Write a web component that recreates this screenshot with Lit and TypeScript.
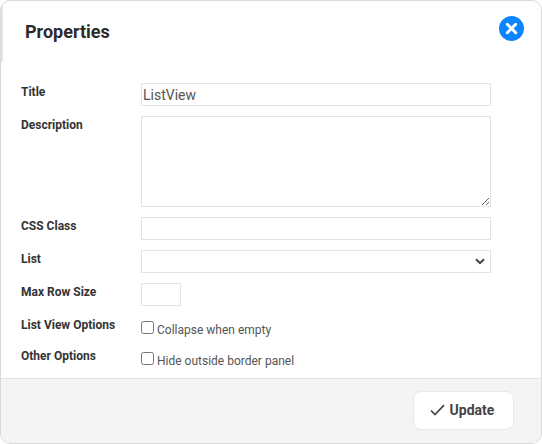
import { LitElement, html, css } from "lit";
import { customElement } from "lit/decorators.js";

@customElement("app-root")
export class AppRoot extends LitElement {
  static styles = css`
    :host { display: block; width: 542px; height: 444px; font-family: Roboto, sans-serif; color: #333; }
    * { box-sizing: border-box; }
    .panel { width: 542px; height: 444px; border: 1px solid #d9d9d9; border-radius: 10px; background: #fff; display: flex; flex-direction: column; overflow: hidden; position: relative; }
    .head { height: 61px; flex: none; display: flex; align-items: center; justify-content: space-between; padding: 0 17px 0 22px; border-left: 2px solid #e4e4e4; }
    h1 { margin: 0; font-size: 18px; font-weight: 700; line-height: 20px; color: #2b2b2b; }
    .close { width: 25px; height: 25px; display: block; position: relative; top: -3px; }
    .body { flex: 1; padding: 21px 0 0 20px; display: flex; flex-direction: column; gap: 10px; }
    .row { display: grid; grid-template-columns: 120px 350px; }
    .row label.name { font-size: 12px; font-weight: 700; line-height: 14px; color: #333; padding-top: 2px; }
    .ctl { display: block; width: 350px; height: 23px; border: 1px solid #e3e3e3; background: #fff; font-family: Roboto, sans-serif; font-size: 14px; color: #555; padding: 0 1px; margin: 0; outline: none; }
    .ta { height: 91px; resize: both; }
    .sel { display: flex; align-items: center; justify-content: flex-end; padding-right: 5px; }
    .small { width: 40px; }
    .opts { height: 21px; }
    .check { display: flex; align-items: flex-start; gap: 3px; font-size: 12px; line-height: 14px; color: #555; padding-top: 7px; height: 21px; }
    .box { width: 13px; height: 13px; flex: none; border: 1px solid #767676; border-radius: 2.5px; background: #fff; margin-top: -2px; }
    .foot { height: 65px; flex: none; background: #f4f4f4; border-top: 1px solid #e3e3e3; display: flex; justify-content: flex-end; align-items: flex-start; padding: 12px 27px 0 0; }
    .btn { width: 101px; height: 39px; background: #fff; border: 1px solid #e8e8e8; border-radius: 8px; display: flex; align-items: center; justify-content: center; gap: 5px; font: 700 14px Roboto, sans-serif; color: #444; padding: 0 3px 2px 0; }
    .btn svg { display: block; }
  `;

  render() {
    return html`
      <div class="panel">
        <div class="head">
          <h1>Properties</h1>
          <svg class="close" viewBox="0 0 25 25" aria-label="Close">
            <circle cx="12.5" cy="12.5" r="12.5" fill="#0a84ff"></circle>
            <path d="M8.3 8.3l8.4 8.4M16.7 8.3l-8.4 8.4" stroke="#fff" stroke-width="3" stroke-linecap="round"></path>
          </svg>
        </div>
        <div class="body">
          <div class="row"><label class="name">Title</label><input class="ctl" value="ListView" /></div>
          <div class="row"><label class="name">Description</label><textarea class="ctl ta"></textarea></div>
          <div class="row"><label class="name">CSS Class</label><input class="ctl" /></div>
          <div class="row"><label class="name">List</label>
            <div class="ctl sel">
              <svg width="10" height="7" viewBox="0 0 10 7"><path d="M1 1.2l4 4 4-4" fill="none" stroke="#444" stroke-width="2"></path></svg>
            </div>
          </div>
          <div class="row"><label class="name">Max Row Size</label><input class="ctl small" /></div>
          <div class="row opts"><label class="name">List View Options</label>
            <div class="check"><span class="box"></span>Collapse when empty</div></div>
          <div class="row opts"><label class="name">Other Options</label>
            <div class="check"><span class="box"></span>Hide outside border panel</div></div>
        </div>
        <div class="foot">
          <button class="btn">
            <svg width="15" height="12" viewBox="0 0 15 12"><path d="M1 6.5l4 4L14 1.2" fill="none" stroke="#444" stroke-width="1.7"></path></svg>
            Update
          </button>
        </div>
      </div>
    `;
  }
}
